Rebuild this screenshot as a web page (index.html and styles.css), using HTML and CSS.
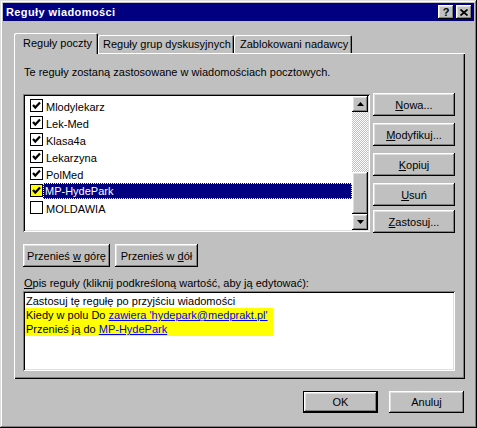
FILE: index.html
```html
<!DOCTYPE html>
<html lang="pl">
<head>
<meta charset="utf-8">
<title>Reguły wiadomości</title>
<link rel="stylesheet" href="styles.css">
</head>
<body>
<div class="window">
  <div class="titlebar">
    <span class="title">Reguły wiadomości</span>
    <div class="tbtns">
      <span class="tbtn help">?</span>
      <span class="tbtn close"><svg width="8" height="7" viewBox="0 0 8 7"><path d="M0.5 0.5 L7.5 6.5 M7.5 0.5 L0.5 6.5" stroke="#000" stroke-width="1.7" fill="none"/></svg></span>
    </div>
  </div>
  <div class="body">
    <div class="tabs">
      <div class="tab active t1">Reguły poczty</div>
      <div class="tab t2">Reguły grup dyskusyjnych</div>
      <div class="tab t3">Zablokowani nadawcy</div>
    </div>
    <div class="panel">
      <p class="intro">Te reguły zostaną zastosowane w wiadomościach pocztowych.</p>
      <div class="rules-row">
        <div class="listbox">
          <ul class="items">
            <li class="item"><span class="cb"><svg width="11" height="11" viewBox="0 0 11 11"><polyline points="2,5 4.3,7.6 9,2.6" fill="none" stroke="#000" stroke-width="2.2"/></svg></span><span class="name">Mlodylekarz</span></li>
            <li class="item"><span class="cb"><svg width="11" height="11" viewBox="0 0 11 11"><polyline points="2,5 4.3,7.6 9,2.6" fill="none" stroke="#000" stroke-width="2.2"/></svg></span><span class="name">Lek-Med</span></li>
            <li class="item"><span class="cb"><svg width="11" height="11" viewBox="0 0 11 11"><polyline points="2,5 4.3,7.6 9,2.6" fill="none" stroke="#000" stroke-width="2.2"/></svg></span><span class="name">Klasa4a</span></li>
            <li class="item"><span class="cb"><svg width="11" height="11" viewBox="0 0 11 11"><polyline points="2,5 4.3,7.6 9,2.6" fill="none" stroke="#000" stroke-width="2.2"/></svg></span><span class="name">Lekarzyna</span></li>
            <li class="item"><span class="cb"><svg width="11" height="11" viewBox="0 0 11 11"><polyline points="2,5 4.3,7.6 9,2.6" fill="none" stroke="#000" stroke-width="2.2"/></svg></span><span class="name">PolMed</span></li>
            <li class="item sel"><span class="cb"><svg width="11" height="11" viewBox="0 0 11 11"><polyline points="2,5 4.3,7.6 9,2.6" fill="none" stroke="#000" stroke-width="2.2"/></svg></span><span class="name">MP-HydePark</span></li>
            <li class="item"><span class="cb"></span><span class="name">MOLDAWIA</span></li>
          </ul>
          <div class="scrollbar">
            <div class="sb-btn"><svg width="7" height="4" viewBox="0 0 7 4"><polygon points="3.5,0 7,4 0,4" fill="#000"/></svg></div>
            <div class="sb-track"></div>
            <div class="sb-thumb"></div>
            <div class="sb-btn"><svg width="7" height="4" viewBox="0 0 7 4"><polygon points="0,0 7,0 3.5,4" fill="#000"/></svg></div>
          </div>
        </div>
        <div class="side-btns">
          <div class="btn"><span><u>N</u>owa...</span></div>
          <div class="btn"><span><u>M</u>odyfikuj...</span></div>
          <div class="btn"><span><u>K</u>opiuj</span></div>
          <div class="btn"><span><u>U</u>suń</span></div>
          <div class="btn last"><span><u>Z</u>astosuj...</span></div>
        </div>
      </div>
      <div class="move-row">
        <div class="btn up"><span>Przenieś <u>w</u> górę</span></div>
        <div class="btn down"><span>Przenieś w <u>d</u>ół</span></div>
      </div>
      <div class="desc-label"><u>O</u>pis reguły (kliknij podkreśloną wartość, aby ją edytować):</div>
      <div class="desc">
        <div class="line">Zastosuj tę regułę po przyjściu wiadomości</div>
        <div class="hl">
          <div class="line">Kiedy w polu Do <span class="link">zawiera 'hydepark@medprakt.pl'</span></div>
          <div class="line">Przenieś ją do <span class="link">MP-HydePark</span></div>
        </div>
      </div>
    </div>
    <div class="footer">
      <div class="btn fbtn default"><span>OK</span></div>
      <div class="btn fbtn"><span>Anuluj</span></div>
    </div>
  </div>
</div>
</body>
</html>
```

FILE: styles.css
```css
* { box-sizing: border-box; }

body {
  margin: 0;
  font-family: "Liberation Sans", Arial, sans-serif;
  font-size: 11px;
  color: #000;
  background: #c0c0c0;
}

.window {
  width: 477px;
  height: 428px;
  padding: 3px;
  background: #c0c0c0;
  box-shadow: inset -1px -1px #000, inset 1px 1px #dfdfdf, inset -2px -2px #808080, inset 2px 2px #fff;
}

.titlebar {
  height: 18px;
  background: #000080;
  display: flex;
  align-items: center;
  justify-content: space-between;
  padding: 0 2px 0 3px;
}

.title {
  color: #fff;
  font-weight: bold;
  font-size: 11px;
  letter-spacing: 0.4px;
}

.tbtns { display: flex; gap: 2px; }

.tbtn {
  width: 16px;
  height: 14px;
  background: #c0c0c0;
  display: flex;
  align-items: center;
  justify-content: center;
  font-weight: bold;
  font-size: 11px;
  line-height: 14px;
  box-shadow: inset -1px -1px #000, inset 1px 1px #fff, inset -2px -2px #808080, inset 2px 2px #dfdfdf;
}

.body { padding: 12px 9px 0 11px; }

.tabs {
  display: flex;
  align-items: flex-end;
  height: 20px;
}

.tab {
  height: 18px;
  display: flex;
  align-items: center;
  background: #c0c0c0;
  border-radius: 2px 2px 0 0;
  box-shadow: inset 1px 1px #fff, inset -1px 0 #000, inset -2px 0 #808080;
  white-space: nowrap;
}

.t1 { width: 84px; padding-left: 9px; }
.t2 { width: 136px; padding-left: 5px; }
.t3 { width: 118px; padding-left: 6px; }

.tab.active {
  height: 21px;
  margin-bottom: -1px;
  position: relative;
  z-index: 1;
  padding-bottom: 1px;
}

.panel {
  height: 326px;
  padding: 12px 10px 0 9px;
  box-shadow: inset 1px 1px #fff, inset -1px -1px #000, inset -2px -2px #808080;
}

.intro {
  margin: 0;
  height: 14px;
  line-height: 14px;
  padding-left: 1px;
}

.rules-row {
  display: flex;
  gap: 3px;
  margin-top: 15px;
}

.listbox {
  width: 347px;
  height: 138px;
  display: flex;
  background: #fff;
  padding: 2px;
  box-shadow: inset 1px 1px #808080, inset -1px -1px #fff, inset 2px 2px #000, inset -2px -2px #dfdfdf;
}

.items {
  flex: 1;
  list-style: none;
  margin: 0;
  padding: 1px 0 0 5px;
}

.item {
  height: 17px;
  display: flex;
  align-items: center;
}

.cb {
  width: 13px;
  height: 13px;
  flex: none;
  border: 1px solid #000;
  background: #fff;
  display: flex;
}

.item.sel .cb { background: #ff0; }

.name {
  height: 16px;
  line-height: 16px;
  padding-left: 2px;
  border: 1px solid transparent;
}

.item.sel .name {
  flex: 1;
  background: #000080;
  color: #fff;
  border: 1px dotted #ffff80;
  line-height: 14px;
  padding-left: 1px;
}

.scrollbar {
  width: 16px;
  display: flex;
  flex-direction: column;
}

.sb-btn, .sb-thumb, .btn {
  background: #c0c0c0;
  box-shadow: inset -1px -1px #000, inset 1px 1px #fff, inset -2px -2px #808080, inset 2px 2px #dfdfdf;
}

.sb-btn {
  height: 16px;
  display: flex;
  align-items: center;
  justify-content: center;
}

.sb-track {
  flex: 1;
  background-color: #fff;
  background-image: repeating-conic-gradient(#c0c0c0 0 25%, #fff 0 50%);
  background-size: 2px 2px;
}

.sb-thumb { height: 42px; }

.side-btns {
  display: flex;
  flex-direction: column;
  width: 82px;
  margin-top: -1px;
}

.btn {
  height: 23px;
  display: flex;
  align-items: center;
  justify-content: center;
  white-space: nowrap;
}

.side-btns .btn + .btn { margin-top: 7px; }
.side-btns .btn.last { margin-top: 4px; }

.move-row {
  display: flex;
  gap: 5px;
  margin-top: 11px;
}

.btn.up { width: 87px; }
.btn.down { width: 83px; }

.desc-label {
  margin-top: 10px;
  height: 14px;
  line-height: 13px;
  padding-left: 1px;
}

.desc {
  width: 432px;
  height: 80px;
  background: #fff;
  padding: 3px 2px 2px 2px;
  box-shadow: inset 1px 1px #808080, inset -1px -1px #fff, inset 2px 2px #000, inset -2px -2px #dfdfdf;
}

.line {
  line-height: 14px;
  padding-left: 1px;
  white-space: nowrap;
}

.hl {
  width: fit-content;
  background: #ff0;
  padding-right: 5px;
}

.link {
  color: #00f;
  text-decoration: underline;
}

.footer {
  display: flex;
  justify-content: flex-end;
  gap: 11px;
  margin-top: 12px;
  padding-right: 1px;
}

.btn.fbtn {
  width: 75px;
  height: 22px;
}

.btn.default {
  box-shadow: inset 0 0 0 1px #000, inset -2px -2px #000, inset 2px 2px #fff, inset -3px -3px #808080, inset 3px 3px #dfdfdf;
}
```
